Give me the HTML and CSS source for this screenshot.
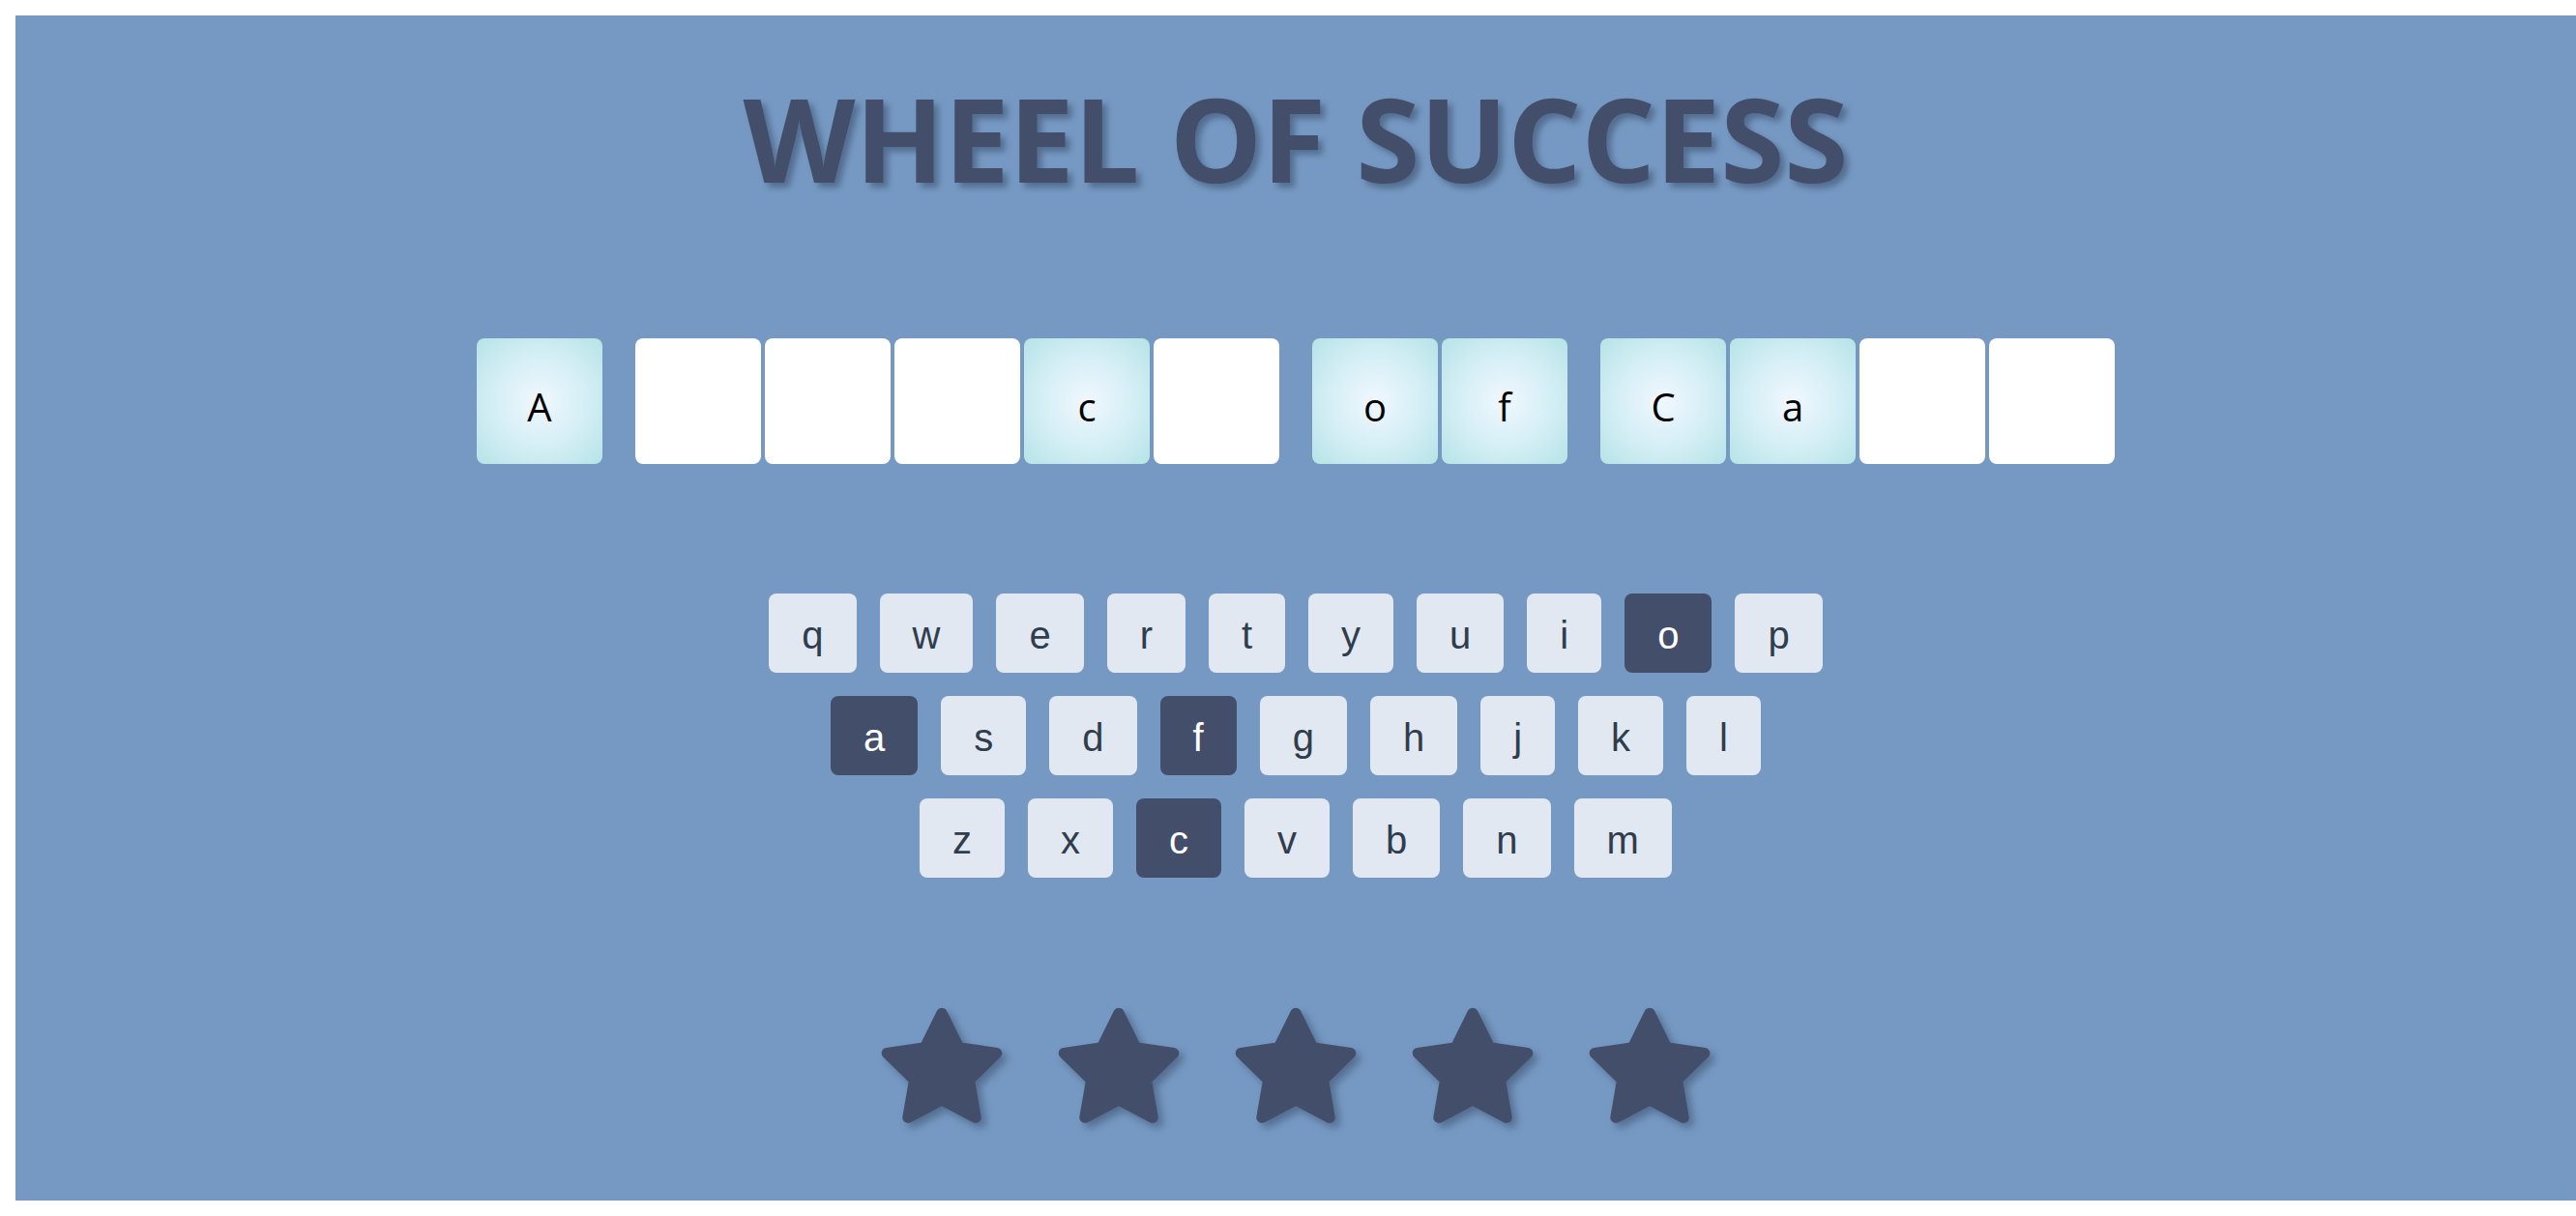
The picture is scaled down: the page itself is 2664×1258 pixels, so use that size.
FILE: index.html
```html
<!DOCTYPE html>
<html lang="en">
<head>
    <meta charset="UTF-8">
    <meta name="viewport" content="width=device-width, initial-scale=1.0">
    <title>Wheel of Success</title>
    <link rel="stylesheet" href="styles.css">
</head>
<body>
    <div class="game">
        <h1 class="title">WHEEL OF SUCCESS</h1>

        <div class="board" id="board">
            <!-- letter tiles are added here -->
        </div>

        <div class="keyboard" id="keyboard">
            <!-- keys are added here -->
        </div>

        <div class="lives" id="lives">
            <!-- stars are added here -->
        </div>
    </div>

    <script>
        document.addEventListener("DOMContentLoaded", function() {
            const phrase = 'A Piece of Cake';
            const guessed = ['o', 'a', 'f', 'c'];
            const rows = ['qwertyuiop', 'asdfghjkl', 'zxcvbnm'];
            const lives = 5;

            const board = document.getElementById('board');
            for (const word of phrase.split(' ')) {
                const wordEl = document.createElement('div');
                wordEl.className = 'word';
                for (const letter of word) {
                    const tile = document.createElement('div');
                    tile.className = 'tile';
                    if (guessed.includes(letter.toLowerCase())) {
                        tile.classList.add('shown');
                        tile.textContent = letter;
                    }
                    wordEl.appendChild(tile);
                }
                board.appendChild(wordEl);
            }

            const keyboard = document.getElementById('keyboard');
            for (const row of rows) {
                const rowEl = document.createElement('div');
                rowEl.className = 'key-row';
                for (const letter of row) {
                    const key = document.createElement('button');
                    key.className = 'key';
                    if (guessed.includes(letter)) key.classList.add('used');
                    key.textContent = letter;
                    rowEl.appendChild(key);
                }
                keyboard.appendChild(rowEl);
            }

            const livesEl = document.getElementById('lives');
            for (let i = 0; i < lives; i++) {
                livesEl.innerHTML += `
                    <svg class="star" viewBox="0 0 24 24">
                        <path d="M12 2l3.09 6.26L22 9.27l-5 4.87 1.18 6.88L12 17.77l-6.18 3.25L7 14.14 2 9.27l6.91-1.01L12 2z"/>
                    </svg>
                `;
            }
        });
    </script>
</body>
</html>
```

FILE: styles.css
```css
body {
    margin: 0;
    padding: 0;
    background-color: #ffffff;
    overflow: hidden;
}

.game {
    background-color: #7699c3;
    margin: 16px 0 16px 16px;
    height: 1226px;
    padding-top: 45px;
    box-sizing: border-box;
    display: flex;
    flex-direction: column;
    align-items: center;
}

.title {
    margin: 0;
    font-family: 'Open Sans', sans-serif;
    font-weight: 700;
    font-size: 120px;
    line-height: normal;
    color: #434f6a;
    text-shadow: 5px 5px 6px rgba(20, 30, 50, 0.35);
}

.board {
    display: flex;
    gap: 34px;
    margin-top: 126px;
}

.word {
    display: flex;
    gap: 4px;
}

.tile {
    width: 130px;
    height: 130px;
    box-sizing: border-box;
    padding-top: 10px;
    border-radius: 8px;
    background-color: #ffffff;
    display: flex;
    align-items: center;
    justify-content: center;
    font-family: 'Open Sans', sans-serif;
    font-size: 40px;
    color: #000000;
}

.tile.shown {
    background: radial-gradient(circle, #f1f7fe 0%, #d3eef5 55%, #b5e3e6 100%);
}

.keyboard {
    margin-top: 134px;
    display: flex;
    flex-direction: column;
    align-items: center;
    gap: 24px;
}

.key-row {
    display: flex;
    gap: 24px;
}

.key {
    height: 82px;
    padding: 4px 34px 0;
    border: none;
    border-radius: 8px;
    background-color: #e2e8f2;
    color: #2f3d4d;
    font-family: 'Liberation Sans', Arial, sans-serif;
    font-size: 40px;
    cursor: pointer;
}

.key.used {
    background-color: #434f6a;
    color: #ffffff;
}

.lives {
    margin-top: 129px;
    display: flex;
    gap: 47px;
}

.star {
    width: 136px;
    height: 136px;
    fill: #434f6a;
    stroke: #434f6a;
    stroke-width: 2;
    stroke-linejoin: round;
    filter: drop-shadow(5px 5px 4px rgba(20, 30, 50, 0.35));
}
```
